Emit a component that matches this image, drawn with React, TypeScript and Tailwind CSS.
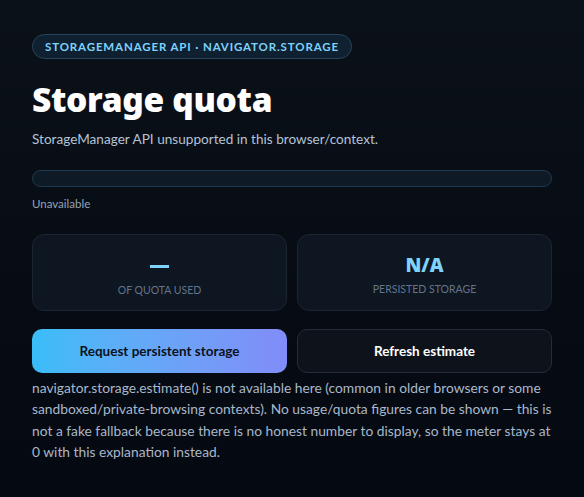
import { useState } from 'react';

type Estimate = { usage: number; quota: number } | null;

function StatCard({ value, label, tone }: { value: string; label: string; tone: 'dash' | 'text' }) {
  return (
    <div className="flex h-[77px] flex-col items-center justify-center rounded-[12px] border border-[#1c2533] bg-[#0e1621] pt-[4px]">
      {tone === 'dash' ? (
        <div className="mt-[3px] flex h-[22px] items-center">
          <span className="block h-[3px] w-[19px] bg-[#7dd3fc]" />
        </div>
      ) : (
        <span
          className="h-[22px] text-[19px] font-black leading-[22px] text-[#7dd3fc]"
          style={{ fontFamily: '"Noto Sans", sans-serif' }}
        >
          {value}
        </span>
      )}
      <span className="mt-[6px] text-[10.5px] uppercase leading-[14px] text-[#64748b]">{label}</span>
    </div>
  );
}

export default function App() {
  const [estimate] = useState<Estimate>(null);
  const pct = estimate ? Math.min(100, (estimate.usage / estimate.quota) * 100) : 0;

  return (
    <div
      className="min-h-[497px] bg-gradient-to-b from-[#0b1118] to-[#050911] px-[32px] pt-[33px] pb-[24px] text-[#cbd5e1]"
      style={{ fontFamily: 'Lato, "Noto Sans", sans-serif' }}
    >
      <div className="inline-flex h-[25px] items-center rounded-full border border-[#27445a] bg-[#0f2030] px-[12px]">
        <span className="text-[11.5px] font-bold uppercase tracking-[0.075em] text-[#7dd3fc]">
          StorageManager API · navigator.storage
        </span>
      </div>

      <h1
        className="mt-[18px] text-[33.5px] font-black leading-[44px] tracking-[-0.01em] text-white"
        style={{ fontFamily: '"Noto Sans", sans-serif' }}
      >
        Storage quota
      </h1>
      <p className="mt-[8px] text-[13.6px] leading-[20px] text-[#b4c3d6]">
        StorageManager API unsupported in this browser/context.
      </p>

      <div className="mt-[21px] h-[17px] overflow-hidden rounded-full border border-[#1f3a50] bg-[#0f1a27]">
        <div className="h-full bg-[#38bdf8]" style={{ width: `${pct}%` }} />
      </div>
      <p className="mt-[9px] text-[11.5px] leading-[16px] text-[#94a3b8]">Unavailable</p>

      <div className="mt-[22px] grid grid-cols-2 gap-[10px]">
        <StatCard value="N/A" label="of quota used" tone="dash" />
        <StatCard value="N/A" label="Persisted storage" tone="text" />
      </div>

      <div className="mt-[18px] grid grid-cols-2 gap-[10px]">
        <button className="h-[44px] rounded-[10px] bg-gradient-to-r from-[#38bdf8] to-[#818cf8] text-[13.5px] font-bold text-[#0b1220]">
          Request persistent storage
        </button>
        <button className="h-[44px] rounded-[10px] border border-[#252c37] bg-[#0e131b] text-[13.5px] font-bold text-white">
          Refresh estimate
        </button>
      </div>

      <p className="mt-[4px] text-[13.8px] leading-[21.3px] text-[#a9b8cb]">
        navigator.storage.estimate() is not available here (common in older browsers or some
        sandboxed/private-browsing contexts). No usage/quota figures can be shown — this is not a fake
        fallback because there is no honest number to display, so the meter stays at 0 with this
        explanation instead.
      </p>
    </div>
  );
}
